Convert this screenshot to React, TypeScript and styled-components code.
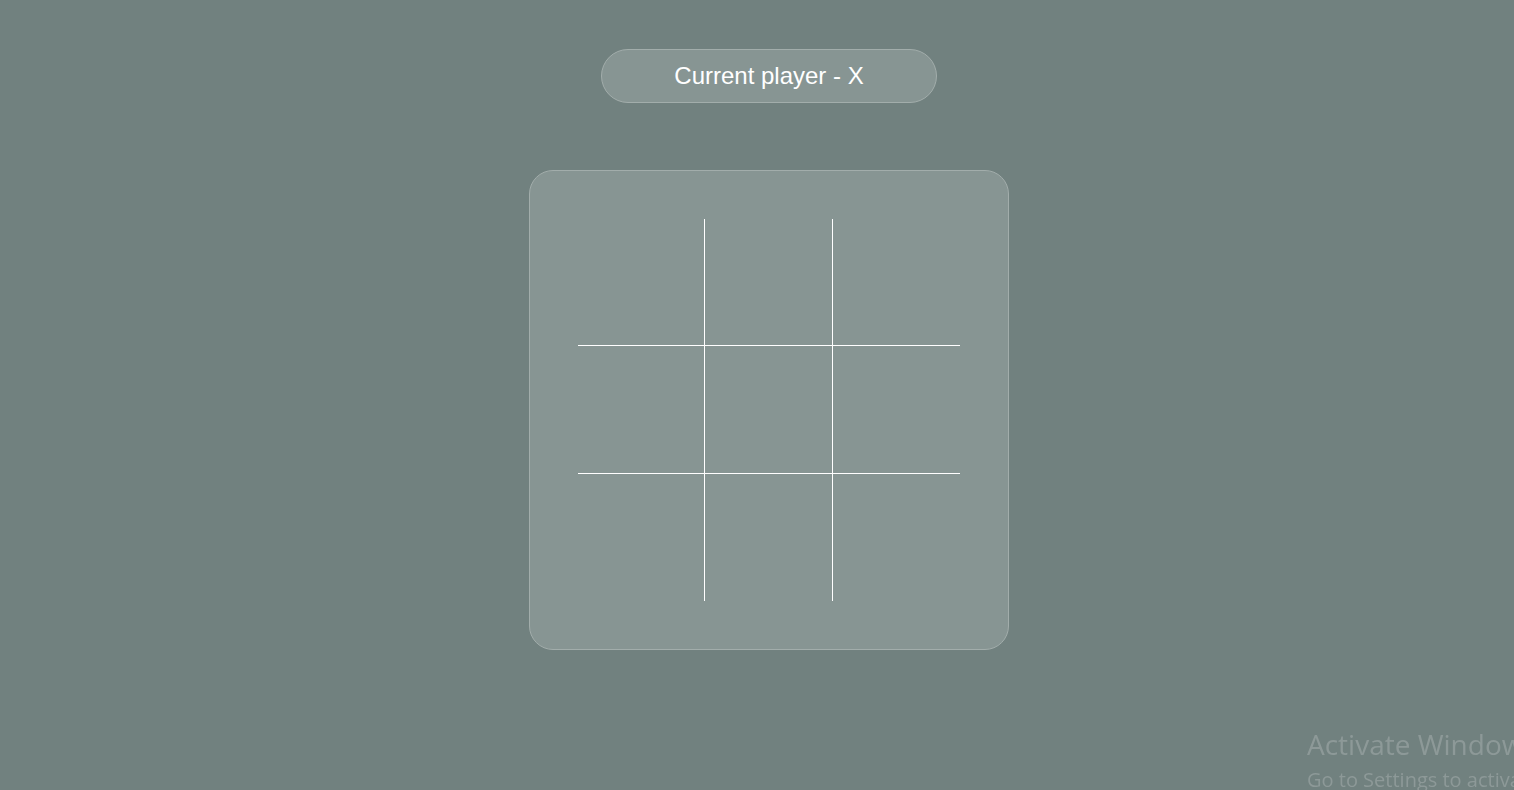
import React from "react";
import styled, { createGlobalStyle } from "styled-components";

const GlobalStyle = createGlobalStyle`
  html, body {
    margin: 0;
    padding: 0;
    background: #71817f;
    font-family: "Liberation Sans", Arial, sans-serif;
    overflow: hidden;
  }
`;

const Page = styled.main`
  min-height: 790px;
  display: flex;
  flex-direction: column;
  align-items: center;
  padding: 49px 0 0 24px;
  box-sizing: border-box;
  gap: 68px;
`;

const Status = styled.div`
  width: 336px;
  height: 54px;
  box-sizing: border-box;
  border: 1px solid #a2adab;
  border-radius: 27px;
  background: #879593;
  color: #ffffff;
  font-size: 24px;
  display: flex;
  align-items: center;
  justify-content: center;
  margin-bottom: -1px;
`;

const Board = styled.div`
  width: 480px;
  height: 480px;
  box-sizing: border-box;
  border: 1px solid #a2adab;
  border-radius: 24px;
  background: #879593;
  padding: 48px;
`;

const Grid = styled.div`
  width: 100%;
  height: 100%;
  display: grid;
  grid-template-columns: repeat(3, 1fr);
  grid-template-rows: repeat(3, 1fr);
`;

const Cell = styled.button<{ $right: boolean; $bottom: boolean }>`
  all: unset;
  box-sizing: border-box;
  cursor: pointer;
  border-right: ${(p) => (p.$right ? "1px solid #ffffff" : "none")};
  border-bottom: ${(p) => (p.$bottom ? "1px solid #ffffff" : "none")};
  display: flex;
  align-items: center;
  justify-content: center;
  color: #ffffff;
  font-size: 64px;
`;

const Watermark = styled.div`
  position: fixed;
  left: 1307px;
  top: 726px;
  color: #8d9998;
  font-family: "Open Sans", "Noto Sans", sans-serif;
  white-space: nowrap;
  pointer-events: none;
`;

const WatermarkTitle = styled.div`
  font-size: 28px;
  line-height: 36px;
`;

const WatermarkSub = styled.div`
  font-size: 20px;
  line-height: 28px;
  margin-top: 4px;
`;

export default function App() {
  const cells = Array.from({ length: 9 }, (_, i) => i);
  return (
    <>
      <GlobalStyle />
      <Page>
        <Status>Current player - X</Status>
        <Board>
          <Grid>
            {cells.map((i) => (
              <Cell key={i} $right={i % 3 !== 2} $bottom={i < 6} />
            ))}
          </Grid>
        </Board>
      </Page>
      <Watermark>
        <WatermarkTitle>Activate Windows</WatermarkTitle>
        <WatermarkSub>Go to Settings to activate Windows.</WatermarkSub>
      </Watermark>
    </>
  );
}
